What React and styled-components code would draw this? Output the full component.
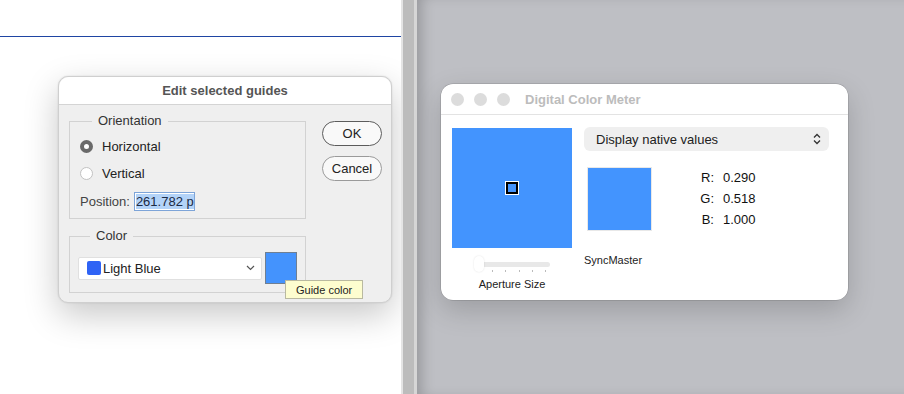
import React from "react";
import styled, { createGlobalStyle } from "styled-components";

const Global = createGlobalStyle`
  html, body { margin: 0; padding: 0; }
  body {
    width: 904px; height: 394px; overflow: hidden;
    font-family: "Liberation Sans", Arial, sans-serif;
    font-size: 13px; color: #222;
    -webkit-font-smoothing: antialiased;
  }
  * { box-sizing: border-box; }
`;

const Screen = styled.div`
  display: flex;
  width: 904px;
  height: 394px;
`;

const LeftPane = styled.div`
  width: 401px;
  flex: none;
  background: #ffffff;
  display: flex;
  flex-direction: column;
`;

const GuideLine = styled.div`
  margin-top: 36px;
  height: 1px;
  background: #1f45a3;
`;

const Divider = styled.div`
  width: 16px;
  flex: none;
  background: linear-gradient(
    to right,
    #e4e4e4 0px, #e4e4e4 2px,
    #bcbcbc 2px, #bcbcbc 13px,
    #d6d6d6 13px, #d6d6d6 16px
  );
`;

const RightPane = styled.div`
  flex: 1;
  background: #bebfc4;
  box-shadow: inset 10px 0 14px -6px rgba(0, 0, 0, 0.22);
  padding: 84px 0 0 24px;
`;

/* ---------- Photoshop dialog ---------- */

const Dialog = styled.div`
  margin: 39px 0 0 58px;
  width: 334px;
  height: 227px;
  border-radius: 10px;
  background: #efefef;
  border: 1px solid #cfcfcf;
  box-shadow: 0 12px 34px rgba(0, 0, 0, 0.22), 0 0 2px rgba(0, 0, 0, 0.12);
  display: flex;
  flex-direction: column;
`;

const DialogTitle = styled.div`
  height: 28px;
  flex: none;
  background: #ffffff;
  border-bottom: 1px solid #d4d4d4;
  border-radius: 10px 10px 0 0;
  display: flex;
  align-items: center;
  justify-content: center;
  font-weight: 700;
  font-size: 13px;
  color: #555;
`;

const DialogBody = styled.div`
  display: grid;
  grid-template-columns: 237px 60px;
  column-gap: 16px;
  padding: 8px 0 0 10px;
`;

const Groups = styled.div`
  display: flex;
  flex-direction: column;
  gap: 9px;
`;

const Group = styled.fieldset`
  margin: 0;
  border: 1px solid #d2d2d2;
  padding: ${(p) => p.$pad};
  min-width: 0;
`;

const Legend = styled.legend`
  margin-left: 12px;
  padding: 0 6px;
  font-size: 13px;
  color: #333;
  line-height: 16px;
`;

const RadioRow = styled.label`
  display: flex;
  align-items: center;
  gap: 9px;
  height: 27px;
  color: #222;
`;

const Radio = styled.span`
  width: 13px;
  height: 13px;
  border-radius: 50%;
  flex: none;
  background: #fff;
  border: ${(p) => (p.$on ? "4px solid #6a6a6a" : "1px solid #c2c2c2")};
`;

const PositionRow = styled.div`
  display: flex;
  align-items: center;
  gap: 4px;
  height: 28px;
  color: #444;
`;

const PosInput = styled.div`
  width: 61px;
  height: 19px;
  border: 1px solid #7da4d8;
  background: #fff;
  display: flex;
  align-items: center;
  padding-left: 1px;
  overflow: hidden;
  white-space: nowrap;
`;

const Selected = styled.span`
  background: #b3d3f8;
  color: #1b2a44;
  line-height: 15px;
  padding-right: 1px;
`;

const ColorRow = styled.div`
  display: flex;
  align-items: center;
  gap: 3px;
  position: relative;
`;

const Select = styled.div`
  width: 184px;
  height: 23px;
  background: #fff;
  border: 1px solid #e0e0e0;
  border-radius: 2px;
  display: flex;
  align-items: center;
  padding: 0 6px 0 8px;
  color: #222;
`;

const SelSwatch = styled.span`
  width: 14px;
  height: 14px;
  background: #2f63f5;
  border-radius: 2px;
  margin-right: 2px;
  flex: none;
`;

const SelText = styled.span`
  flex: 1;
`;

const Swatch = styled.div`
  width: 32px;
  height: 32px;
  background: ${(p) => p.$color};
  border: 1px solid #6f7f92;
`;

const Tooltip = styled.div`
  position: absolute;
  left: 207px;
  top: 28px;
  height: 19px;
  padding: 0 10px;
  background: #fdfdcf;
  border: 1px solid #b9b9a0;
  font-size: 11px;
  color: #222;
  display: flex;
  align-items: center;
  white-space: nowrap;
  z-index: 2;
`;

const Buttons = styled.div`
  display: flex;
  flex-direction: column;
  gap: 10px;
  padding-top: 8px;
`;

const Button = styled.button`
  width: 60px;
  height: 25px;
  border-radius: 13px;
  border: 1px solid ${(p) => (p.$primary ? "#5c5c5c" : "#9a9a9a")};
  background: #f9f9f9;
  font: inherit;
  font-size: 13px;
  color: #222;
  padding: 0;
`;

/* ---------- Digital Color Meter ---------- */

const Meter = styled.div`
  width: 407px;
  height: 216px;
  background: #fff;
  border-radius: 12px;
  box-shadow: 0 10px 28px rgba(0, 0, 0, 0.18), 0 0 0 0.5px rgba(0, 0, 0, 0.2);
  display: flex;
  flex-direction: column;
`;

const MeterTitle = styled.div`
  height: 31px;
  border-bottom: 1px solid #e3e3e3;
  display: flex;
  align-items: center;
  padding-left: 10px;
  gap: 10px;
`;

const Light = styled.span`
  width: 13px;
  height: 13px;
  border-radius: 50%;
  background: #dcdcdc;
`;

const MeterName = styled.span`
  margin-left: 5px;
  font-weight: 700;
  font-size: 13px;
  color: #bcbcbc;
`;

const MeterBody = styled.div`
  display: grid;
  grid-template-columns: 120px 245px;
  column-gap: 12px;
  padding: 12px 0 0 11px;
`;

const LeftCol = styled.div`
  display: flex;
  flex-direction: column;
`;

const BigSquare = styled.div`
  width: 120px;
  height: 120px;
  margin-top: 1px;
  background: #4394fe;
  display: flex;
  align-items: center;
  justify-content: center;
`;

const Aperture = styled.div`
  width: 12px;
  height: 12px;
  border: 2px solid #000;
  outline: 1px solid #fff;
  background: #4394fe;
`;

const Slider = styled.div`
  margin: 8px 0 0 22px;
  width: 76px;
  height: 16px;
  position: relative;
  display: flex;
  align-items: center;
`;

const Track = styled.div`
  width: 100%;
  height: 5px;
  border-radius: 3px;
  background: #e8e8e8;
`;

const Thumb = styled.div`
  position: absolute;
  left: 0;
  top: 0;
  width: 10px;
  height: 16px;
  border-radius: 5px;
  background: #fff;
  box-shadow: 0 0 2px rgba(0, 0, 0, 0.12);
`;

const Ticks = styled.div`
  display: flex;
  justify-content: space-between;
  width: 54px;
  margin: -2px 0 0 40px;
`;

const Tick = styled.span`
  width: 1px;
  height: 2px;
  background: #bbb;
`;

const ApertureLabel = styled.div`
  margin-top: 6px;
  align-self: center;
  font-size: 11px;
  color: #222;
`;

const RightCol = styled.div`
  display: flex;
  flex-direction: column;
`;

const Popup = styled.div`
  height: 24px;
  border-radius: 6px;
  background: #efefef;
  display: flex;
  align-items: center;
  justify-content: space-between;
  padding: 0 8px 0 12px;
  font-size: 13px;
  color: #222;
`;

const Readout = styled.div`
  display: flex;
  align-items: center;
  margin-top: 16px;
`;

const SmallSwatch = styled.div`
  width: 65px;
  height: 64px;
  margin-left: 3px;
  background: #4394fe;
  border: 1px solid #e8e8e8;
`;

const Values = styled.div`
  display: grid;
  grid-template-columns: 24px auto;
  column-gap: 9px;
  row-gap: 5px;
  margin-left: 38px;
  font-size: 13px;
  line-height: 16px;
  color: #111;
`;

const Label = styled.span`
  text-align: right;
`;

const Screenname = styled.div`
  margin-top: 23px;
  font-size: 11px;
  color: #222;
`;

export default function App() {
  return (
    <>
      <Global />
      <Screen>
        <LeftPane>
          <GuideLine />
          <Dialog>
            <DialogTitle>Edit selected guides</DialogTitle>
            <DialogBody>
              <Groups>
                <Group $pad="4px 10px 3px 10px">
                  <Legend>Orientation</Legend>
                  <RadioRow>
                    <Radio $on />
                    Horizontal
                  </RadioRow>
                  <RadioRow>
                    <Radio />
                    Vertical
                  </RadioRow>
                  <PositionRow>
                    Position:
                    <PosInput>
                      <Selected>261.782 p</Selected>
                    </PosInput>
                  </PositionRow>
                </Group>
                <Group $pad="8px 8px 8px 8px">
                  <Legend>Color</Legend>
                  <ColorRow>
                    <Select>
                      <SelSwatch />
                      <SelText>Light Blue</SelText>
                      <svg width="9" height="6" viewBox="0 0 9 6">
                        <path d="M1 1l3.5 3.5L8 1" fill="none" stroke="#555" strokeWidth="1.2" />
                      </svg>
                    </Select>
                    <Swatch $color="#4493fd" />
                    <Tooltip>Guide color</Tooltip>
                  </ColorRow>
                </Group>
              </Groups>
              <Buttons>
                <Button $primary>OK</Button>
                <Button>Cancel</Button>
              </Buttons>
            </DialogBody>
          </Dialog>
        </LeftPane>
        <Divider />
        <RightPane>
          <Meter>
            <MeterTitle>
              <Light />
              <Light />
              <Light />
              <MeterName>Digital Color Meter</MeterName>
            </MeterTitle>
            <MeterBody>
              <LeftCol>
                <BigSquare>
                  <Aperture />
                </BigSquare>
                <Slider>
                  <Track />
                  <Thumb />
                </Slider>
                <Ticks>
                  {[0, 1, 2, 3, 4].map((i) => (
                    <Tick key={i} />
                  ))}
                </Ticks>
                <ApertureLabel>Aperture Size</ApertureLabel>
              </LeftCol>
              <RightCol>
                <Popup>
                  Display native values
                  <svg width="8" height="12" viewBox="0 0 8 12">
                    <path d="M1 4.5L4 1.5L7 4.5M1 7.5L4 10.5L7 7.5" fill="none" stroke="#333" strokeWidth="1.3" />
                  </svg>
                </Popup>
                <Readout>
                  <SmallSwatch />
                  <Values>
                    <Label>R:</Label>
                    <span>0.290</span>
                    <Label>G:</Label>
                    <span>0.518</span>
                    <Label>B:</Label>
                    <span>1.000</span>
                  </Values>
                </Readout>
                <Screenname>SyncMaster</Screenname>
              </RightCol>
            </MeterBody>
          </Meter>
        </RightPane>
      </Screen>
    </>
  );
}
